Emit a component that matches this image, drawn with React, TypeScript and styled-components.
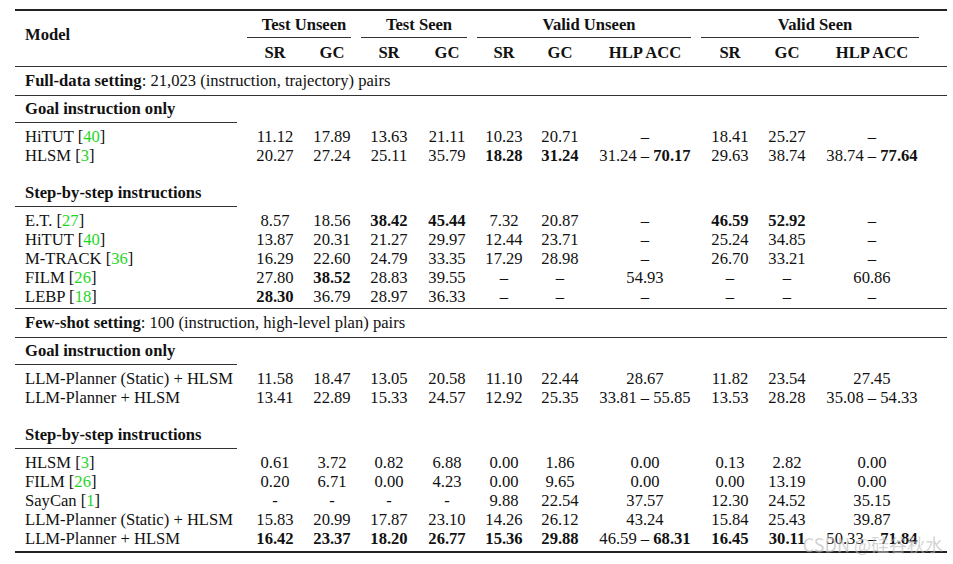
import React from 'react';
import styled, { createGlobalStyle } from 'styled-components';

type Row = {
  name: string
  cite?: string
  cells: string[]
}

type Block = {
  title: string
  rows: Row[]
}

type Setting = {
  label: string
  detail: string
  blocks: Block[]
}

// column template shared by header and every data row
const COLS = '232px 56px 58px 56px 60px 54px 58px 112px 58px 56px 114px 18px'

const SETTINGS: Setting[] = [
  {
    label: 'Full-data setting',
    detail: ': 21,023 (instruction, trajectory) pairs',
    blocks: [
      {
        title: 'Goal instruction only',
        rows: [
          { name: 'HiTUT', cite: '40', cells: ['11.12', '17.89', '13.63', '21.11', '10.23', '20.71', '–', '18.41', '25.27', '–'] },
          { name: 'HLSM', cite: '3', cells: ['20.27', '27.24', '25.11', '35.79', '**18.28**', '**31.24**', '31.24 – **70.17**', '29.63', '38.74', '38.74 – **77.64**'] },
        ],
      },
      {
        title: 'Step-by-step instructions',
        rows: [
          { name: 'E.T.', cite: '27', cells: ['8.57', '18.56', '**38.42**', '**45.44**', '7.32', '20.87', '–', '**46.59**', '**52.92**', '–'] },
          { name: 'HiTUT', cite: '40', cells: ['13.87', '20.31', '21.27', '29.97', '12.44', '23.71', '–', '25.24', '34.85', '–'] },
          { name: 'M-TRACK', cite: '36', cells: ['16.29', '22.60', '24.79', '33.35', '17.29', '28.98', '–', '26.70', '33.21', '–'] },
          { name: 'FILM', cite: '26', cells: ['27.80', '**38.52**', '28.83', '39.55', '–', '–', '54.93', '–', '–', '60.86'] },
          { name: 'LEBP', cite: '18', cells: ['**28.30**', '36.79', '28.97', '36.33', '–', '–', '–', '–', '–', '–'] },
        ],
      },
    ],
  },
  {
    label: 'Few-shot setting',
    detail: ': 100 (instruction, high-level plan) pairs',
    blocks: [
      {
        title: 'Goal instruction only',
        rows: [
          { name: 'LLM-Planner (Static) + HLSM', cells: ['11.58', '18.47', '13.05', '20.58', '11.10', '22.44', '28.67', '11.82', '23.54', '27.45'] },
          { name: 'LLM-Planner + HLSM', cells: ['13.41', '22.89', '15.33', '24.57', '12.92', '25.35', '33.81 – 55.85', '13.53', '28.28', '35.08 – 54.33'] },
        ],
      },
      {
        title: 'Step-by-step instructions',
        rows: [
          { name: 'HLSM', cite: '3', cells: ['0.61', '3.72', '0.82', '6.88', '0.00', '1.86', '0.00', '0.13', '2.82', '0.00'] },
          { name: 'FILM', cite: '26', cells: ['0.20', '6.71', '0.00', '4.23', '0.00', '9.65', '0.00', '0.00', '13.19', '0.00'] },
          { name: 'SayCan', cite: '1', cells: ['-', '-', '-', '-', '9.88', '22.54', '37.57', '12.30', '24.52', '35.15'] },
          { name: 'LLM-Planner (Static) + HLSM', cells: ['15.83', '20.99', '17.87', '23.10', '14.26', '26.12', '43.24', '15.84', '25.43', '39.87'] },
          { name: 'LLM-Planner + HLSM', cells: ['**16.42**', '**23.37**', '**18.20**', '**26.77**', '**15.36**', '**29.88**', '46.59 – **68.31**', '**16.45**', '**30.11**', '50.33 – **71.84**'] },
        ],
      },
    ],
  },
]

const GROUPS = [
  { label: 'Test Unseen', col: 2, span: 2 },
  { label: 'Test Seen', col: 4, span: 2 },
  { label: 'Valid Unseen', col: 6, span: 3 },
  { label: 'Valid Seen', col: 9, span: 3 },
]

const METRICS = ['SR', 'GC', 'SR', 'GC', 'SR', 'GC', 'HLP ACC', 'SR', 'GC', 'HLP ACC']

// "31.24 – **70.17**" -> mixed regular / bold pieces
function Marked({ text }: { text: string }) {
  const parts = text.split('**')
  return (
    <>
      {parts.map((p, i) => (i % 2 === 1 ? <b key={i}>{p}</b> : <React.Fragment key={i}>{p}</React.Fragment>))}
    </>
  )
}

function App() {
  return (
    <>
      <GlobalStyle />
      <Page>
        <Table>
          <Header>
            <ModelHead>Model</ModelHead>
            {GROUPS.map((g) => (
              <GroupHead key={g.label} $col={g.col} $span={g.span}>
                <span>{g.label}</span>
                <MidRule />
              </GroupHead>
            ))}
            {METRICS.map((m, i) => (
              <MetricHead key={i} $col={i + 2}>{m}</MetricHead>
            ))}
          </Header>

          {SETTINGS.map((s, si) => (
            <React.Fragment key={s.label}>
              <Section>
                <b>{s.label}</b>{s.detail}
              </Section>
              {s.blocks.map((b, bi) => {
                const lastBlock = bi === s.blocks.length - 1
                const after = !lastBlock ? 'gap' : si === SETTINGS.length - 1 ? 'end' : 'rule'
                return (
                  <React.Fragment key={b.title}>
                    <SubHead>{b.title}</SubHead>
                    <Rows $after={after}>
                      {b.rows.map((r, ri) => (
                        <DataRow key={ri}>
                          <NameCell>
                            {r.name}
                            {r.cite && (
                              <> [<Cite>{r.cite}</Cite>]</>
                            )}
                          </NameCell>
                          {r.cells.map((c, ci) => (
                            <NumCell key={ci}><Marked text={c} /></NumCell>
                          ))}
                        </DataRow>
                      ))}
                    </Rows>
                  </React.Fragment>
                )
              })}
            </React.Fragment>
          ))}
        </Table>
        <Watermark>CSDN @硅谷秋水</Watermark>
      </Page>
    </>
  )
}

const GlobalStyle = createGlobalStyle`
  html, body {
    margin: 0;
    padding: 0;
    background: #ffffff;
  }
  body {
    font-family: "Liberation Serif", "Times New Roman", serif;
    color: #111111;
  }
`

const Page = styled.div`
  position: relative;
  width: 953px;
  height: 564px;
  padding: 9px 0 0 15px;
  box-sizing: border-box;
  overflow: hidden;
`

const Table = styled.div`
  width: 932px;
  border-top: 2px solid #222;
  border-bottom: 2px solid #222;
  font-size: 16.6px;
  line-height: 19px;
`

const Header = styled.div`
  display: grid;
  grid-template-columns: ${COLS};
  grid-template-rows: 27px 28px;
  font-weight: 700;
`

const ModelHead = styled.div`
  grid-column: 1;
  grid-row: 1 / 3;
  padding: 14px 0 0 10px;
`

const GroupHead = styled.div<{ $col: number; $span: number }>`
  grid-column: ${(p) => p.$col} / span ${(p) => p.$span};
  grid-row: 1;
  display: flex;
  flex-direction: column;
  padding-top: 4px;
  text-align: center;
`

const MidRule = styled.div`
  margin: auto 10px 0 0;
  border-bottom: 1px solid #333;
`

const MetricHead = styled.div<{ $col: number }>`
  grid-column: ${(p) => p.$col};
  grid-row: 2;
  display: flex;
  align-items: center;
  justify-content: center;
  white-space: nowrap;
`

const Section = styled.div`
  height: 24px;
  padding: 4px 0 0 10px;
  border-top: 1px solid #333;
  border-bottom: 1px solid #333;
`

const SubHead = styled.div`
  width: 212px;
  height: 23px;
  padding: 3px 0 0 10px;
  font-weight: 700;
  border-bottom: 1px solid #333;
`

const Rows = styled.div<{ $after: 'gap' | 'rule' | 'end' }>`
  padding-top: 4px;
  padding-bottom: ${(p) => (p.$after === 'rule' ? '2px' : p.$after === 'end' ? '3px' : '0')};
  margin-bottom: ${(p) => (p.$after === 'gap' ? '15px' : '0')};
`

const DataRow = styled.div`
  display: grid;
  grid-template-columns: ${COLS};
  height: 19px;
  white-space: nowrap;
`

const NameCell = styled.div`
  padding-left: 10px;
`

const Cite = styled.span`
  color: #1fd61f;
`

const NumCell = styled.div`
  text-align: center;
`

const Watermark = styled.div`
  position: absolute;
  right: 10px;
  top: 533px;
  font-family: "Noto Sans CJK SC", "Noto Sans", sans-serif;
  font-size: 18px;
  line-height: 22px;
  color: rgba(160, 160, 160, 0.55);
  -webkit-text-stroke: 0.3px rgba(255, 255, 255, 0.6);
  pointer-events: none;
`

export default App;
